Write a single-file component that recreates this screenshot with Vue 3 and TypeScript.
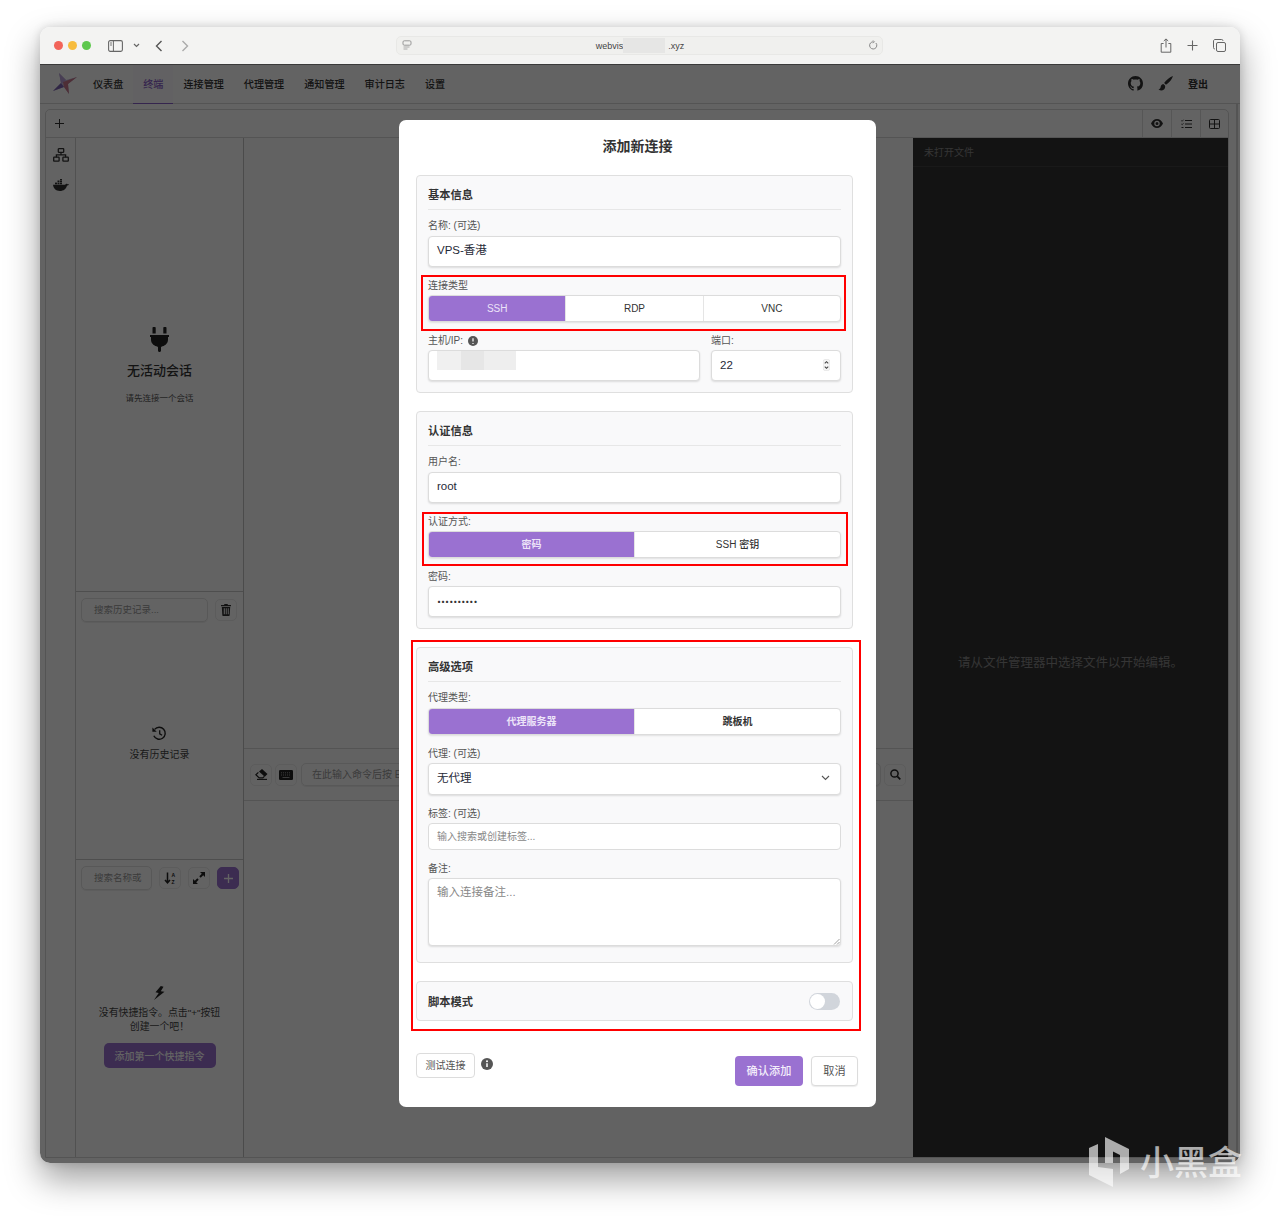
<script setup lang="ts">
const navItems: string[] = ['仪表盘', '终端', '连接管理', '代理管理', '通知管理', '审计日志', '设置']
const connTypes: string[] = ['SSH', 'RDP', 'VNC']
</script>

<template>
  <div class="page">
    <div class="window">
      <header class="titlebar">
        <div class="lights"><i class="red"></i><i class="yellow"></i><i class="green"></i></div>
        <svg class="tb-sidebar" viewBox="0 0 15 12" width="15" height="12"><rect x=".6" y=".6" width="13.8" height="10.8" rx="1.6" fill="none" stroke="#666" stroke-width="1.1"/><path d="M5.4.8v10.4" stroke="#666"/><path d="M2 3h2M2 5h2" stroke="#777"/></svg>
        <svg class="tb-chev" viewBox="0 0 7 5" width="7" height="5"><path d="M1 1l2.500 2.500L6 1" fill="none" stroke="#666" stroke-width="1.200"/></svg>
        <svg class="tb-back" viewBox="0 0 8 12" width="8" height="12"><path d="M6.500 1L1.500 6l5 5" fill="none" stroke="#555" stroke-width="1.400"/></svg>
        <svg class="tb-fwd" viewBox="0 0 8 12" width="8" height="12"><path d="M1.500 1l5 5-5 5" fill="none" stroke="#aaa" stroke-width="1.400"/></svg>
        <div class="urlbar">
          <svg class="url-ico" viewBox="0 0 10 11" width="10" height="11"><rect x="1" y=".8" width="8" height="4.400" rx="1.200" fill="none" stroke="#999"/><path d="M1.500 7h6M1.500 9h4" stroke="#aaa"/></svg>
          <span class="url-text">webvis<span class="url-blur"></span>.xyz</span>
          <svg class="url-reload" viewBox="0 0 10 10" width="10" height="10"><path d="M7.900 3a3.600 3.600 0 1 1-2.400-1.200" fill="none" stroke="#888"/><path d="M5 .4l1.400 1.400L5 3.200" fill="none" stroke="#888" stroke-width=".9"/></svg>
        </div>
        <div class="tb-right">
          <svg viewBox="0 0 12 15" width="12" height="15"><path d="M3.600 5.500H1.200v8.700h9.600V5.500H8.400" fill="none" stroke="#666"/><path d="M6 9.500V1M3.800 3L6 .9 8.200 3" fill="none" stroke="#666"/></svg>
          <svg viewBox="0 0 11 11" width="11" height="11"><path d="M5.500.5v10M.5 5.500h10" stroke="#666" stroke-width="1.100"/></svg>
          <svg viewBox="0 0 13 13" width="13" height="13"><rect x="3.500" y="3.500" width="9" height="9" rx="1.500" fill="none" stroke="#666"/><path d="M10 1.800C10 1 9.500.5 8.700.5H2C1.200.5.500 1.200.500 2v6.700c0 .8.500 1.300 1.300 1.300" fill="none" stroke="#666"/></svg>
        </div>
      </header>

      <div class="app">
        <nav class="nav">
          <svg class="logo" viewBox="0 0 24 24" width="24" height="24">
            <path d="M6 1l7 7 11-3-9 7 1 10-5-7-11 4 8-8z" fill="#c9bcdc"/>
            <path d="M6 1l7 7-3 3-2 0z" fill="#b9a0d8"/>
            <path d="M0 19l8-8 3 4z" fill="#7d62b3"/>
            <path d="M10 10l14-5-9 7 1 10-5-7z" fill="#c8788c"/>
          </svg>
          <a v-for="item in navItems" :key="item" class="nav-item" :class="{ active: item === '终端' }">{{ item }}</a>
          <div class="nav-right">
            <svg viewBox="0 0 16 16" width="15" height="15"><path fill="#333" d="M8 0C3.580 0 0 3.580 0 8c0 3.540 2.290 6.530 5.470 7.590.4.070.55-.17.55-.38 0-.19-.01-.82-.01-1.490-2.010.37-2.530-.49-2.690-.94-.09-.23-.48-.94-.82-1.130-.28-.15-.68-.52-.01-.53.63-.01 1.080.58 1.230.82.72 1.210 1.870.87 2.330.66.07-.52.28-.87.51-1.070-1.780-.2-3.640-.89-3.640-3.950 0-.87.31-1.590.82-2.150-.08-.2-.36-1.020.08-2.120 0 0 .67-.21 2.200.82.64-.18 1.320-.27 2-.27.68 0 1.360.09 2 .27 1.530-1.040 2.200-.82 2.200-.82.44 1.100.16 1.920.08 2.120.51.56.82 1.270.82 2.150 0 3.070-1.870 3.750-3.650 3.950.29.25.54.73.54 1.480 0 1.070-.01 1.930-.01 2.200 0 .21.15.46.55.38A8.013 8.013 0 0 0 16 8c0-4.420-3.580-8-8-8z"/></svg>
            <svg class="brush" viewBox="0 0 15 15" width="15" height="15"><path fill="#333" d="M15 0c-3 .9-6.700 4-8.900 7l1.900 1.800C11 7 14.100 3.200 15 0zM5.300 7.900C3.300 8.200 2.800 9.800 2.600 11.200 2.400 12.400 1.600 13 .5 13.200c1.600 1.400 3.600 1.500 5.100.6 1.400-.9 1.900-2.600 1.400-4.200z"/></svg>
            <span class="logout">登出</span>
          </div>
        </nav>

        <main class="stage">
          <section class="panel">
            <div class="toolbar">
              <svg class="add-tab" viewBox="0 0 9 9" width="9" height="9"><path d="M4.500 0v9M0 4.500h9" stroke="#333" stroke-width="1"/></svg>
              <div class="tool-group">
                <div class="tool"><svg viewBox="0 0 12 9" width="12" height="9"><path fill="#333" fill-rule="evenodd" d="M6 0c2.700 0 4.900 2 6 4.500C10.900 7 8.700 9 6 9S1.100 7 0 4.500C1.100 2 3.300 0 6 0zm0 1.800a2.700 2.700 0 1 0 0 5.400 2.700 2.700 0 0 0 0-5.400zm0 1.200a1.500 1.500 0 1 1 0 3 1.500 1.500 0 0 1 0-3z"/></svg></div>
                <div class="tool"><svg viewBox="0 0 11 10" width="11" height="10"><path d="M4 1.500h7M4 5h7M4 8.500h7" stroke="#333"/><path d="M.3 1.500l.9.8L2.500.7M.3 5l.9.8L2.500 4.200" fill="none" stroke="#333" stroke-width=".8"/><path d="M.5 8.500h2" stroke="#333"/></svg></div>
                <div class="tool"><svg viewBox="0 0 11 10" width="11" height="10"><rect x=".5" y=".5" width="10" height="9" rx="1" fill="none" stroke="#333"/><path d="M5.500.5v9M.5 5h10" stroke="#333"/></svg></div>
              </div>
            </div>

            <div class="workspace">
              <aside class="rail">
                <svg viewBox="0 0 16 14" width="16" height="14"><g fill="none" stroke="#333" stroke-width="1.300"><rect x="5.300" y=".7" width="5.400" height="3.600" rx=".5"/><rect x=".7" y="9.200" width="5.400" height="4" rx=".5"/><rect x="9.900" y="9.200" width="5.400" height="4" rx=".5"/><path d="M8 4.300v2.500M3.400 9.200V6.800h9.200v2.400"/></g></svg>
                <svg viewBox="0 0 16 12" width="16" height="12"><path fill="#333" d="M0 5.800h12.200c.3-.8 1-1.200 1.800-1 .3.100.5.300.6.500.5-.1 1-.1 1.400.1-.4.800-1.100 1.100-2 1.100C13.200 9.800 10.800 12 6.800 12 2.900 12 .4 9.500 0 5.800z"/><rect x="2" y="3.600" width="2" height="1.700" fill="#333"/><rect x="4.500" y="3.600" width="2" height="1.700" fill="#333"/><rect x="7" y="3.600" width="2" height="1.700" fill="#333"/><rect x="4.500" y="1.500" width="2" height="1.700" fill="#333"/><rect x="7" y="1.500" width="2" height="1.700" fill="#333"/><rect x="7" y="0" width="2" height="1.200" fill="#333"/></svg>
              </aside>

              <aside class="sidebar">
                <div class="pane session">
                  <svg viewBox="0 0 19 25" width="19" height="25"><path fill="#222" d="M3.500 0h1.200c.6 0 1 .4 1 1v5.500H2.500V1c0-.6.400-1 1-1zm10.800 0h1.200c.6 0 1 .4 1 1v5.500h-3.200V1c0-.6.400-1 1-1zM0 8h19v2h-1v2.500c0 3.500-2.300 5.900-5.500 6.800-.8.200-1.500.500-1.500 1.300V23.500c0 .8-.6 1.500-1.500 1.500S8 24.300 8 23.500v-2.900c0-.8-.7-1.100-1.500-1.300C3.300 18.400 1 16 1 12.500V10H0z"/></svg>
                  <h3>无活动会话</h3>
                  <p>请先连接一个会话</p>
                </div>

                <div class="pane history">
                  <div class="pane-head">
                    <div class="fake-input grow">搜索历史记录...</div>
                    <div class="sq-btn"><svg viewBox="0 0 10 12" width="10" height="12"><path fill="#333" fill-rule="evenodd" d="M3.500 0h3l.5 1h3v1.300H0V1h3zM.8 3h8.400l-.5 8c0 .6-.5 1-1 1H2.300c-.5 0-1-.4-1-1zm2 1.300v6h1v-6zm2 0v6h.9v-6zm2 0v6H7.700v-6z"/></svg></div>
                  </div>
                  <div class="empty">
                    <svg viewBox="0 0 15 15" width="15" height="15"><path fill="none" stroke="#222" stroke-width="1.400" d="M2.600 3.400A6 6 0 1 1 1.800 9.800"/><path fill="#222" d="M.4 1.500v4.300h4.300z"/><path fill="none" stroke="#222" stroke-width="1.300" d="M7.700 4.200v3.600l2.400 1.500"/></svg>
                    <span class="history-text">没有历史记录</span>
                  </div>
                </div>

                <div class="pane quick">
                  <div class="pane-head">
                    <div class="fake-input q-input">搜索名称或</div>
                    <div class="sq-btn"><svg viewBox="0 0 13 12" width="13" height="12"><path d="M3.500.5V10M1 8l2.500 2.800L6 8" fill="none" stroke="#222" stroke-width="1.500"/><text x="7.500" y="5" font-size="5" font-weight="700" fill="#222" font-family="Liberation Sans">A</text><text x="7.500" y="11.500" font-size="5" font-weight="700" fill="#222" font-family="Liberation Sans">Z</text></svg></div>
                    <div class="sq-btn"><svg viewBox="0 0 12 12" width="12" height="12"><path fill="#222" d="M7 0h5v5l-1.800-1.800-2.500 2.500-1.400-1.400 2.500-2.500zM5 12H0V7l1.800 1.800 2.500-2.500 1.400 1.400-2.500 2.500z"/></svg></div>
                    <div class="sq-btn primary"><svg viewBox="0 0 9 9" width="9" height="9"><path d="M4.500 0v9M0 4.500h9" stroke="#fff" stroke-width="1.300"/></svg></div>
                  </div>
                  <div class="empty">
                    <svg viewBox="0 0 11 14" width="11" height="14"><path fill="#222" d="M6.800 0L1.500 6.300l3.200.7L0 14 10.500 5.800 6.800 5.200 9.500.7z"/></svg>
                    <span class="quick-text">没有快捷指令。点击"+"按钮<br>创建一个吧！</span>
                    <button class="add-first" type="button">添加第一个快捷指令</button>
                  </div>
                </div>
              </aside>

              <div class="center">
                <div class="term"></div>
                <div class="cmdbar">
                  <div class="sq-btn"><svg viewBox="0 0 13 11" width="13" height="11"><path fill="#222" d="M7 0l5.500 5-2.700 2.700L4 2.600z"/><path d="M3.400 3.300L.9 5.800l3.300 3.100h3.600L9.400 7.300" fill="none" stroke="#222" stroke-width="1.200"/><path d="M2 10.400h10" stroke="#222" stroke-width="1.100"/></svg></div>
                  <div class="sq-btn"><svg viewBox="0 0 14 10" width="14" height="10"><rect width="14" height="10" rx="1.300" fill="#222"/><path d="M2 2.800h10M2 5h10" stroke="#999" stroke-dasharray="1 1" stroke-width="1"/><path d="M3.500 7.500h7" stroke="#999"/></svg></div>
                  <div class="fake-input grow cmd-input">在此输入命令后按 E</div>
                  <div class="sq-btn"><svg viewBox="0 0 11 11" width="11" height="11"><circle cx="4.500" cy="4.500" r="3.600" fill="none" stroke="#222" stroke-width="1.500"/><path d="M7.300 7.300l3 3" stroke="#222" stroke-width="1.700"/></svg></div>
                </div>
                <div class="term"></div>
              </div>

              <div class="editor">
                <div class="editor-head">未打开文件</div>
                <div class="editor-body">请从文件管理器中选择文件以开始编辑。</div>
              </div>
            </div>
          </section>
          <div class="edge-lines"></div>
        </main>

        <div class="overlay">
          <div class="modal">
            <h2 class="modal-title">添加新连接</h2>

            <section class="card">
              <h4 class="card-title">基本信息</h4>
              <div class="form">
                <div class="group">
                  <label>名称: (可选)</label>
                  <div class="input">VPS-香港</div>
                </div>
                <div class="group">
                  <label>连接类型</label>
                  <div class="seg">
                    <span v-for="(t, i) in connTypes" :key="t" :class="{ on: i === 0 }">{{ t }}</span>
                  </div>
                </div>
                <div class="host-row">
                  <div class="group host">
                    <label>主机/IP:
                      <svg class="info" viewBox="0 0 10 10" width="10" height="10"><circle cx="5" cy="5" r="5" fill="#555"/><path d="M5 2.200v3.400M5 6.900v1" stroke="#fff" stroke-width="1.200"/></svg>
                    </label>
                    <div class="input host-input"><span class="mosaic"></span></div>
                  </div>
                  <div class="group port">
                    <label>端口:</label>
                    <div class="input port-input">22
                      <span class="spin"><svg viewBox="0 0 6 10" width="7" height="12"><rect x=".25" y=".25" width="5.500" height="9.500" rx="1.500" fill="#f5f5f5" stroke="#ddd" stroke-width=".5"/><path d="M1.500 3.600L3 2.200l1.500 1.400M1.500 6.400L3 7.800l1.500-1.400" fill="none" stroke="#444" stroke-width=".9"/></svg></span>
                    </div>
                  </div>
                </div>
              </div>
            </section>

            <section class="card">
              <h4 class="card-title">认证信息</h4>
              <div class="form">
                <div class="group">
                  <label>用户名:</label>
                  <div class="input">root</div>
                </div>
                <div class="group">
                  <label>认证方式:</label>
                  <div class="seg strong"><span class="on">密码</span><span class="mid">SSH 密钥</span></div>
                </div>
                <div class="group">
                  <label>密码:</label>
                  <div class="input pw">••••••••••</div>
                </div>
              </div>
            </section>

            <section class="card">
              <h4 class="card-title">高级选项</h4>
              <div class="form last">
                <div class="group">
                  <label>代理类型:</label>
                  <div class="seg strong"><span class="on">代理服务器</span><span>跳板机</span></div>
                </div>
                <div class="group">
                  <label>代理: (可选)</label>
                  <div class="input select"><span>无代理</span>
                    <svg viewBox="0 0 9 6" width="9" height="6"><path d="M1 1l3.500 3.500L8 1" fill="none" stroke="#555" stroke-width="1.100"/></svg>
                  </div>
                </div>
                <div class="group">
                  <label>标签: (可选)</label>
                  <div class="input tags">输入搜索或创建标签...</div>
                </div>
                <div class="group">
                  <label>备注:</label>
                  <div class="textarea">输入连接备注...
                    <svg class="grip" viewBox="0 0 7 7" width="7" height="7"><path d="M6.500 1L1 6.500M6.500 4L4 6.500" stroke="#888" stroke-width=".8"/></svg>
                  </div>
                </div>
              </div>
            </section>

            <section class="card script">
              <h4>脚本模式</h4>
              <span class="switch"><i></i></span>
            </section>

            <footer class="modal-foot">
              <div class="foot-left">
                <button class="btn-test" type="button">测试连接</button>
                <svg class="info foot-info" viewBox="0 0 12 12" width="12" height="12"><circle cx="6" cy="6" r="6" fill="#555"/><path d="M6 5.200v3.800" stroke="#fff" stroke-width="1.500"/><circle cx="6" cy="3.300" r="1" fill="#fff"/></svg>
              </div>
              <div class="foot-right">
                <button class="btn-ok" type="button">确认添加</button>
                <button class="btn-cancel" type="button">取消</button>
              </div>
            </footer>

            <div class="mark m1"></div>
            <div class="mark m2"></div>
            <div class="mark m3"></div>
          </div>
        </div>
      </div>
    </div>

    <div class="watermark">
      <svg viewBox="0 0 40 50" width="40" height="50"><path fill="#fff" d="M16 0l24 12v20l-9 5V18l-7-3.500V26h-8z"/><path fill="#fff" d="M0 11l9-4v23l15 2v18L0 38z"/></svg>
      <span>小黑盒</span>
    </div>
  </div>
</template>

<style>
html, body { margin: 0; background: #fff; overflow: hidden; }
</style>

<style scoped>
.page {
  position: relative;
  width: 1280px;
  height: 1216px;
  padding-top: 27px;
  box-sizing: border-box;
  font-family: "Liberation Sans", "Noto Sans CJK SC", sans-serif;
  color: #333;
  overflow: hidden;
}
.window {
  position: relative;
  margin: 0 40px;
  height: 1136px;
  border-radius: 10px;
  overflow: hidden;
  display: flex;
  flex-direction: column;
  box-shadow: 0 16px 34px rgba(0, 0, 0, .38), 0 0 10px rgba(0, 0, 0, .14);
}
.titlebar {
  height: 37px;
  flex: none;
  background: #f3f3f2;
  border-bottom: 1px solid #3a3a3a;
  display: flex;
  align-items: center;
  position: relative;
}
.lights { display: flex; gap: 5px; margin-left: 14px; }
.lights i { width: 9px; height: 9px; border-radius: 50%; display: block; }
.red { background: #f2645a; }
.yellow { background: #f7bc3e; }
.green { background: #5ec84e; }
.tb-sidebar { margin-left: 17px; }
.tb-chev { margin-left: 10px; }
.tb-back { margin-left: 15px; }
.tb-fwd { margin-left: 18px; }
.urlbar {
  position: absolute;
  left: 356px;
  top: 9px;
  width: 487px;
  height: 19px;
  box-sizing: border-box;
  background: #f0f0ee;
  border: 1px solid #e8e8e6;
  border-radius: 5px;
  display: flex;
  align-items: center;
  justify-content: center;
}
.url-ico { position: absolute; left: 5px; top: 3px; }
.url-reload { position: absolute; right: 4px; top: 3px; }
.url-text { font-size: 9px; color: #444; display: flex; align-items: center; margin-left: 1px; }
.url-blur { display: inline-block; width: 42px; height: 15px; background: #e6e6e5; margin: 0 3px 0 0; }
.tb-right {
  position: absolute;
  right: 14px;
  top: 11px;
  display: flex;
  align-items: center;
  gap: 15px;
}
.app { flex: 1; position: relative; display: flex; flex-direction: column; background: #fff; min-height: 0; }
.nav {
  height: 39px;
  flex: none;
  box-sizing: border-box;
  border-bottom: 1px solid #d8d8d8;
  display: flex;
  align-items: stretch;
  padding-left: 13px;
}
.logo { align-self: center; margin-right: 6px; }
.nav-item {
  padding: 0 10px 1px;
  font-size: 10.100px;
  color: #333;
  font-weight: 500;
  display: flex;
  align-items: center;
  margin-bottom: -1px;
  border-bottom: 1px solid transparent;
  box-sizing: border-box;
}
.nav-item.active { color: #8a5fc9; border-bottom-color: #8a5fc9; background: #fbf9fe; }
.nav-right { margin-left: auto; display: flex; align-items: center; margin-right: 32px; padding-bottom: 1px; }
.brush { margin-left: 15px; }
.logout { margin-left: 15px; font-size: 10px; font-weight: 700; color: #333; }
.stage { flex: 1; min-height: 0; padding: 5px 11px 5px 5px; display: flex; position: relative; }
.edge-lines {
  position: absolute;
  top: 0;
  bottom: 0;
  right: 1px;
  width: 4px;
  box-sizing: border-box;
  background: #d8d8d8;
  border-left: 1px solid #fff;
  border-right: 1px solid #fff;
}
.panel {
  flex: 1;
  min-width: 0;
  box-sizing: border-box;
  border: 1px solid #d8d8d8;
  border-radius: 5px 5px 0 0;
  display: flex;
  flex-direction: column;
  overflow: hidden;
}
.toolbar {
  height: 28px;
  flex: none;
  box-sizing: border-box;
  border-bottom: 1px solid #d8d8d8;
  display: flex;
  align-items: center;
}
.add-tab { margin-left: 9px; }
.tool-group { margin-left: auto; display: flex; height: 100%; }
.tool {
  width: 28px;
  border-left: 1px solid #dedede;
  display: flex;
  align-items: center;
  justify-content: center;
}
.tool:last-child { width: 27px; }
.workspace { flex: 1; display: flex; min-height: 0; }
.rail {
  width: 30px;
  flex: none;
  box-sizing: border-box;
  border-right: 1px solid #d0d0d0;
  display: flex;
  flex-direction: column;
  align-items: center;
  padding-top: 10px;
  gap: 17px;
}
.sidebar {
  width: 168px;
  flex: none;
  box-sizing: border-box;
  border-right: 1px solid #c0c0c0;
  display: flex;
  flex-direction: column;
}
.pane { display: flex; flex-direction: column; min-height: 0; }
.session { height: 453px; align-items: center; justify-content: center; padding-top: 1px; box-sizing: border-box; }
.session h3 { margin: 11px 0 0; font-size: 13px; line-height: 16px; font-weight: 500; color: #333; }
.session p { margin: 13px 0 0; font-size: 8.500px; line-height: 12px; color: #555; }
.history { height: 268px; border-top: 1px solid #c8c8c8; box-sizing: border-box; }
.quick { flex: 1; border-top: 1px solid #c8c8c8; }
.pane-head { display: flex; align-items: center; gap: 7px; padding: 6px 6px 0 5px; }
.fake-input {
  height: 24px;
  box-sizing: border-box;
  border: 1px solid #e2e2e2;
  border-radius: 5px;
  box-shadow: 0 1px 1px rgba(0, 0, 0, .07);
  font-size: 9.500px;
  line-height: 22px;
  padding-left: 12px;
  color: #999;
  white-space: nowrap;
  overflow: hidden;
}
.grow { flex: 1; min-width: 0; }
.q-input { width: 71px; flex: none; }
.sq-btn {
  width: 22px;
  height: 22px;
  flex: none;
  box-sizing: border-box;
  border: 1px solid #ececec;
  border-radius: 5px;
  display: flex;
  align-items: center;
  justify-content: center;
}
.sq-btn.primary { background: #9a71d1; border-color: #9a71d1; }
.empty { flex: 1; display: flex; flex-direction: column; align-items: center; justify-content: center; font-size: 10px; line-height: 14px; color: #444; text-align: center; padding-top: 6px; }
.history-text { margin-top: 7px; }
.quick-text { margin-top: 6px; font-size: 9.900px; }
.add-first {
  margin-top: 9px;
  width: 112px;
  height: 25px;
  border: none;
  border-radius: 5px;
  background: #9a71d1;
  color: #fff;
  font: 500 10px "Liberation Sans", "Noto Sans CJK SC", sans-serif;
  padding: 0;
}
.center { flex: 1; min-width: 0; display: flex; flex-direction: column; background: #fdfdfd; }
.term { flex: 1; }
.term:first-child { flex: none; height: 610px; }
.cmdbar {
  height: 53px;
  flex: none;
  box-sizing: border-box;
  border-top: 1px solid #d8d8d8;
  border-bottom: 1px solid #d8d8d8;
  display: flex;
  align-items: center;
  gap: 3px;
  padding: 0 7px 0 6px;
}
.cmd-input { height: 23px; margin-left: 1px; font-size: 10px; line-height: 21px; padding-left: 10px; }
.editor { width: 315px; flex: none; background: #333; display: flex; flex-direction: column; }
.editor-head { height: 29px; flex: none; box-sizing: border-box; border-bottom: 1px solid #414141; padding-left: 11px; line-height: 29px; font-size: 10px; color: #888; }
.editor-body { flex: 1; display: flex; align-items: center; justify-content: center; font-size: 12.500px; color: #888; padding-bottom: 2px; }
.overlay { position: absolute; inset: 0; background: rgba(0, 0, 0, .61); }
.modal {
  position: absolute;
  left: 359px;
  top: 55px;
  width: 477px;
  height: 987px;
  box-sizing: border-box;
  background: #fff;
  border-radius: 7px;
  padding: 16px 23px 0 17px;
}
.modal-title { margin: 0 -6px 19px 0; height: 20px; text-align: center; font-size: 14px; line-height: 20px; font-weight: 600; color: #333; }
.card {
  box-sizing: border-box;
  border: 1px solid #dfdfdf;
  border-radius: 4px;
  background: #f9f9fa;
  padding: 0 11px 11px;
  margin-bottom: 18px;
}
.card-title {
  margin: 0 0 9px;
  height: 34px;
  box-sizing: border-box;
  padding-top: 11px;
  line-height: 16px;
  font-size: 11.250px;
  font-weight: 700;
  color: #333;
  border-bottom: 1px solid #e7e7e7;
}
.form { display: flex; flex-direction: column; gap: 11px; }
.form.last { padding-bottom: 5px; }
.group { display: flex; flex-direction: column; }
.group label {
  display: flex;
  align-items: center;
  gap: 5px;
  height: 13px;
  margin-bottom: 4px;
  font-size: 10px;
  line-height: 13px;
  color: #555;
}
.group + .group label, .host-row label {
  padding-top: 1px;
  margin-bottom: 3px;
}
.info { display: block; }
.input {
  height: 31px;
  box-sizing: border-box;
  background: #fff;
  border: 1px solid #dcdcdc;
  border-radius: 4px;
  box-shadow: 0 1px 2px rgba(0, 0, 0, .12);
  padding: 0 8px;
  font-size: 11.500px;
  line-height: 27px;
  color: #1f2937;
}
.pw { font-family: Inter, sans-serif; font-size: 7.200px; color: #333; line-height: 29px; }
.seg {
  height: 27px;
  box-sizing: border-box;
  display: flex;
  background: #fff;
  border: 1px solid #dcdcdc;
  border-radius: 4px;
  overflow: hidden;
  box-shadow: 0 1px 2px rgba(0, 0, 0, .1);
}
.seg span {
  flex: 1;
  text-align: center;
  font-size: 10px;
  line-height: 25px;
  color: #333;
  border-left: 1px solid #e5e5e5;
}
.seg span:first-child { border-left: none; }
.seg span.on { background: #9a71d1; color: #ece3f8; }
.seg.strong span { font-weight: 700; }
.seg.strong span.mid { font-weight: 500; }
.host-row { display: flex; gap: 11px; }
.host { flex: 1; min-width: 0; }
.port { width: 130px; flex: none; }
.host-input { position: relative; }
.mosaic {
  position: absolute;
  left: 8px;
  top: 0;
  width: 79px;
  height: 19px;
  background: linear-gradient(90deg, #f0f0f0 0 30%, #e6e6e6 30% 60%, #eeeeee 60% 100%);
}
.port-input { position: relative; line-height: 29px; }
.spin { position: absolute; right: 10px; top: 8px; line-height: 0; }
.select { height: 32px; display: flex; align-items: center; justify-content: space-between; line-height: normal; padding-right: 10px; padding-bottom: 4px; }
.select svg { margin-top: 2px; }
.tags { height: 27px; line-height: 25px; font-size: 10px; color: #888; box-shadow: none; }
.textarea {
  position: relative;
  height: 68px;
  box-sizing: border-box;
  background: #fff;
  border: 1px solid #dcdcdc;
  border-radius: 4px;
  box-shadow: 0 1px 2px rgba(0, 0, 0, .12);
  padding: 6px 8px;
  font-size: 11.500px;
  line-height: 15px;
  color: #888;
}
.grip { position: absolute; right: 0; bottom: 0; }
.script {
  height: 40px;
  padding: 0 12px 0 11px;
  margin-bottom: 0;
  display: flex;
  align-items: center;
  justify-content: space-between;
}
.script h4 { margin: 0; font-size: 11.250px; font-weight: 700; color: #333; }
.switch { width: 31px; height: 17px; border-radius: 9px; background: #d1d5db; position: relative; display: block; }
.switch i { position: absolute; left: 1px; top: 1px; width: 15px; height: 15px; border-radius: 50%; background: #fff; display: block; }
.modal-foot {
  margin-top: 32px;
  margin-right: -5px;
  display: flex;
  justify-content: space-between;
  align-items: flex-start;
}
.foot-left { display: flex; align-items: flex-start; gap: 6px; }
.btn-test {
  width: 59px;
  height: 25px;
  background: #fff;
  border: 1px solid #dcdcdc;
  border-radius: 4px;
  padding: 0 0 2px;
  font: 10px "Liberation Sans", "Noto Sans CJK SC", sans-serif;
  color: #555;
}
.foot-info { margin-top: 5px; }
.foot-right { display: flex; gap: 8px; margin-top: 3px; }
.btn-ok, .btn-cancel {
  height: 30px;
  border-radius: 4px;
  padding: 0 0 2px;
  font: 11.200px "Liberation Sans", "Noto Sans CJK SC", sans-serif;
}
.btn-ok { width: 68px; border: none; background: #9a71d1; color: #f3edfb; font-weight: 500; }
.btn-cancel { width: 47px; background: #fff; border: 1px solid #dcdcdc; color: #555; box-shadow: 0 1px 1px rgba(0, 0, 0, .08); }
.mark { position: absolute; border: 2px solid #f00; box-sizing: border-box; pointer-events: none; }
.m1 { left: 22px; top: 155px; width: 425px; height: 56px; }
.m2 { left: 23px; top: 392px; width: 426px; height: 54px; }
.m3 { left: 12px; top: 520px; width: 450px; height: 391px; }
.watermark {
  position: absolute;
  left: 1089px;
  top: 1137px;
  display: flex;
  align-items: flex-start;
  opacity: .65;
  color: #fff;
}
.watermark svg { display: block; }
.watermark span {
  margin-left: 11px;
  font: 500 34px/48px "Noto Sans CJK SC", sans-serif;
  white-space: nowrap;
}
</style>
